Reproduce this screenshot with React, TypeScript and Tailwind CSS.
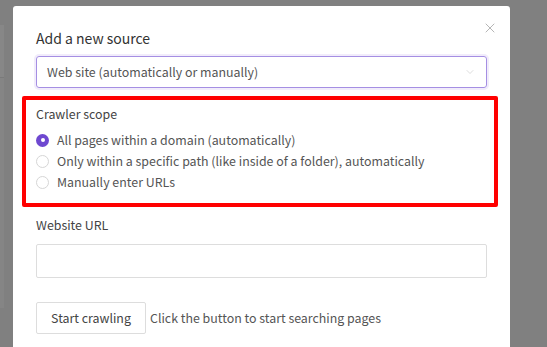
import { ChevronDown, X } from "lucide-react";

const options = [
  "All pages within a domain (automatically)",
  "Only within a specific path (like inside of a folder), automatically",
  "Manually enter URLs",
];

export default function App() {
  const selected = 0;
  return (
    <div
      className="flex w-[547px] h-[347px] overflow-hidden bg-[#808080] pr-[37px] pt-[6px]"
      style={{ fontFamily: '"Noto Sans CJK KR", "Noto Sans", sans-serif' }}
    >
      {/* page behind the overlay */}
      <div className="mr-[9px] mt-[19px] flex h-[283px] w-[4px] flex-col">
        <div className="h-[53px] border-b border-[#7a7a7a] bg-[#878787]" />
        <div className="flex-1 bg-[#858585]" />
      </div>
      <div className="relative h-[400px] flex-1 rounded-[3px] bg-white pt-[22px] text-[#333]">
        <button className="absolute right-[12px] top-[14px] text-[#999]">
          <X size={16} strokeWidth={1.1} />
        </button>
        <div className="px-[23px]">
          <h2 className="text-[14px] leading-[20px] text-[#333]">Add a new source</h2>
          <div className="mt-[8px] flex h-[32px] items-center justify-between rounded-[3px] border border-[#a58fe3] px-[10px] shadow-[0_0_0_2px_#f1ecfb] text-[12.4px] text-[#555]">
            <span>Web site (automatically or manually)</span>
            <ChevronDown size={12} strokeWidth={1} className="text-[#bbb]" />
          </div>
        </div>
        <div className="ml-[9px] mr-[12px] mt-[8px] h-[111px] rounded-[2px] border-4 border-[#ff0000] px-[10px] pt-[4px] text-[12.4px]">
          <div className="leading-[20px] text-[#444]">Crawler scope</div>
          <div className="mt-[7px] flex flex-col gap-[3px]">
            {options.map((opt, i) => (
              <label key={opt} className="flex h-[18px] items-center gap-[8px] text-[#555]">
                {i === selected ? (
                  <span className="flex h-[13px] w-[13px] items-center justify-center rounded-full bg-[#6e48d0]">
                    <span className="h-[4px] w-[4px] rounded-full bg-white" />
                  </span>
                ) : (
                  <span className="h-[13px] w-[13px] rounded-full border border-[#d6d6d6] bg-white" />
                )}
                <span>{opt}</span>
              </label>
            ))}
          </div>
        </div>
        <div className="px-[23px] text-[12.4px]">
          <div className="mt-[8px] leading-[20px] text-[#444]">Website URL</div>
          <div className="mt-[9px] h-[34px] rounded-[2px] border border-[#ddd]" />
          <div className="mt-[24px] flex items-center gap-[4px]">
            <button className="h-[32px] w-[110px] rounded-[2px] border border-[#ddd] bg-white text-[#444]">
              Start crawling
            </button>
            <span className="text-[#555]">Click the button to start searching pages</span>
          </div>
        </div>
      </div>
    </div>
  );
}
